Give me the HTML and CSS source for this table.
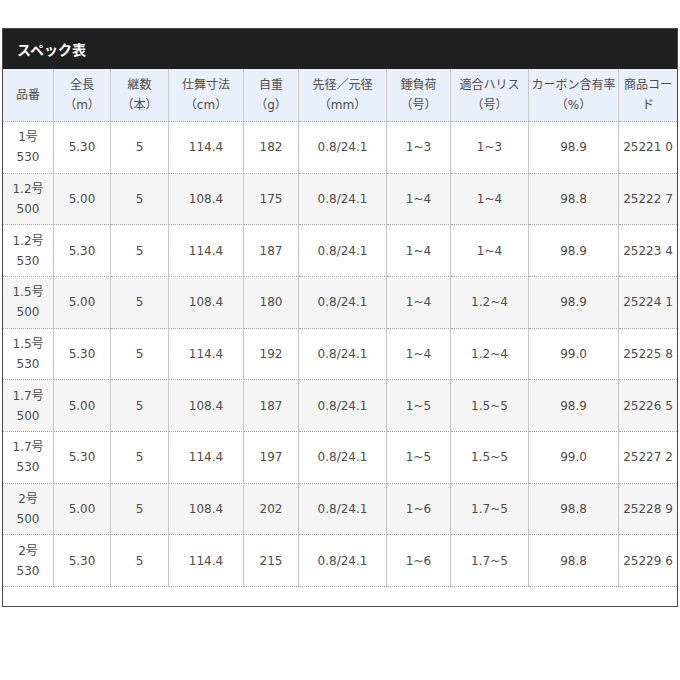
FILE: index.html
```html
<!DOCTYPE html>
<html lang="ja">
<head>
<meta charset="utf-8">
<title>スペック表</title>
<link rel="stylesheet" href="styles.css">
</head>
<body>
<div class="spec">
  <div class="spec-title">スペック表</div>
  <table class="spec-table">
    <colgroup>
      <col class="c1"><col class="c2"><col class="c3"><col class="c4"><col class="c5">
      <col class="c6"><col class="c7"><col class="c8"><col class="c9"><col class="c10">
    </colgroup>
    <thead>
      <tr>
        <th>品番</th>
        <th>全長<br>（m）</th>
        <th>継数<br>（本）</th>
        <th>仕舞寸法<br>（cm）</th>
        <th>自重<br>（g）</th>
        <th>先径／元径<br>（mm）</th>
        <th>錘負荷<br>（号）</th>
        <th>適合ハリス<br>（号）</th>
        <th>カーボン含有率<br>（%）</th>
        <th>商品コー<br>ド</th>
      </tr>
    </thead>
    <tbody>
      <tr><td>1号<br>530</td><td>5.30</td><td>5</td><td>114.4</td><td>182</td><td>0.8/24.1</td><td>1~3</td><td>1~3</td><td>98.9</td><td>25221 0</td></tr>
      <tr><td>1.2号<br>500</td><td>5.00</td><td>5</td><td>108.4</td><td>175</td><td>0.8/24.1</td><td>1~4</td><td>1~4</td><td>98.8</td><td>25222 7</td></tr>
      <tr><td>1.2号<br>530</td><td>5.30</td><td>5</td><td>114.4</td><td>187</td><td>0.8/24.1</td><td>1~4</td><td>1~4</td><td>98.9</td><td>25223 4</td></tr>
      <tr><td>1.5号<br>500</td><td>5.00</td><td>5</td><td>108.4</td><td>180</td><td>0.8/24.1</td><td>1~4</td><td>1.2~4</td><td>98.9</td><td>25224 1</td></tr>
      <tr><td>1.5号<br>530</td><td>5.30</td><td>5</td><td>114.4</td><td>192</td><td>0.8/24.1</td><td>1~4</td><td>1.2~4</td><td>99.0</td><td>25225 8</td></tr>
      <tr><td>1.7号<br>500</td><td>5.00</td><td>5</td><td>108.4</td><td>187</td><td>0.8/24.1</td><td>1~5</td><td>1.5~5</td><td>98.9</td><td>25226 5</td></tr>
      <tr><td>1.7号<br>530</td><td>5.30</td><td>5</td><td>114.4</td><td>197</td><td>0.8/24.1</td><td>1~5</td><td>1.5~5</td><td>99.0</td><td>25227 2</td></tr>
      <tr><td>2号<br>500</td><td>5.00</td><td>5</td><td>108.4</td><td>202</td><td>0.8/24.1</td><td>1~6</td><td>1.7~5</td><td>98.8</td><td>25228 9</td></tr>
      <tr><td>2号<br>530</td><td>5.30</td><td>5</td><td>114.4</td><td>215</td><td>0.8/24.1</td><td>1~6</td><td>1.7~5</td><td>98.8</td><td>25229 6</td></tr>
    </tbody>
  </table>
</div>
</body>
</html>
```

FILE: styles.css
```css
html, body {
  margin: 0;
  padding: 0;
  background: #ffffff;
}

body {
  font-family: "DejaVu Sans", "Noto Sans CJK JP", sans-serif;
  font-size: 12px;
  color: #4d4d4d;
}

.spec {
  margin: 28px 0 0 2px;
  width: 674px;
  border: 1px solid #4a4a4a;
  padding-bottom: 19px;
  background: #ffffff;
}

.spec-title {
  height: 40px;
  line-height: 40px;
  background: #1f1f1f;
  color: #ffffff;
  font-family: "Noto Sans CJK JP", sans-serif;
  font-weight: 700;
  font-size: 14px;
  padding-left: 14px;
}

.spec-table {
  width: 674px;
  table-layout: fixed;
  border-collapse: separate;
  border-spacing: 0;
}

.c1 { width: 51px; }
.c2 { width: 57px; }
.c3 { width: 58px; }
.c4 { width: 75px; }
.c5 { width: 55px; }
.c6 { width: 88px; }
.c7 { width: 64px; }
.c8 { width: 78px; }
.c9 { width: 90px; }
.c10 { width: 58px; }

.spec-table th,
.spec-table td {
  box-sizing: border-box;
  padding: 0 2px;
  text-align: center;
  vertical-align: middle;
  line-height: 20px;
  border-right: 1px solid #c9c9c9;
  border-bottom: 1px dotted #a8a8a8;
  font-weight: 400;
}

.spec-table th:last-child,
.spec-table td:last-child {
  border-right: none;
}

.spec-table thead tr {
  height: 53px;
}

.spec-table th {
  background: #e7f0fb;
  color: #4d4d4d;
}

.spec-table tbody tr {
  height: 51.67px;
}

.spec-table tbody tr:nth-child(even) td {
  background: #f5f5f5;
}
```
